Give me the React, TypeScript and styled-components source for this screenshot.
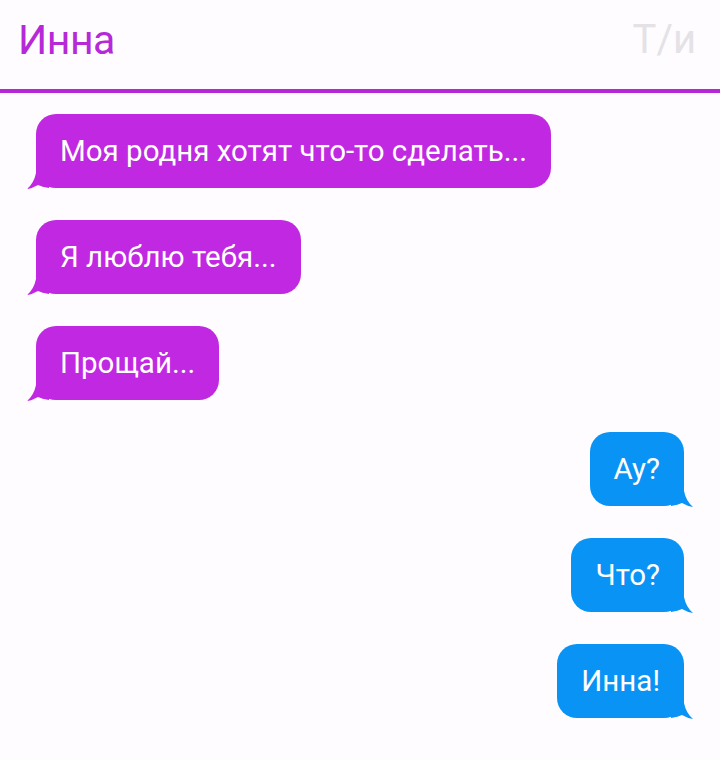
import React from "react";
import styled, { createGlobalStyle } from "styled-components";

const Global = createGlobalStyle`
  html, body { margin: 0; padding: 0; background: #fefcfe; }
  body { font-family: Roboto, "Noto Sans", sans-serif; }
`;

const Page = styled.div`
  width: 720px;
  height: 760px;
  background: #fefcfe;
  display: flex;
  flex-direction: column;
`;

const Header = styled.header`
  height: 93px;
  box-sizing: border-box;
  display: flex;
  align-items: center;
  justify-content: space-between;
  padding: 0 24px 10px 18px;
  border-bottom: 4px solid #b526d6;
`;

const Title = styled.h1`
  margin: 0;
  font-weight: 400;
  font-size: 41px;
  color: #b52ad6;
  letter-spacing: -0.5px;
`;

const Tag = styled.span`
  font-size: 40px;
  color: #e4e2e6;
  font-weight: 400;
`;

const List = styled.div`
  display: flex;
  flex-direction: column;
  gap: 32px;
  padding: 21px 36px 0 36px;
`;

const Row = styled.div<{ $mine?: boolean }>`
  display: flex;
  justify-content: ${(p) => (p.$mine ? "flex-end" : "flex-start")};
`;

const Bubble = styled.div<{ $mine?: boolean }>`
  position: relative;
  height: 74px;
  box-sizing: border-box;
  display: flex;
  align-items: center;
  padding: 0 24px 0 24px;
  border-radius: 20px;
  background: ${(p) => (p.$mine ? "#0994f5" : "#c128e1")};
  color: #ffffff;
  font-size: 29.5px;
  white-space: nowrap;
`;

const Tail = styled.svg<{ $mine?: boolean }>`
  position: absolute;
  bottom: -1px;
  width: 24px;
  height: 24px;
  ${(p) => (p.$mine ? "right: -9px; transform: scaleX(-1);" : "left: -9px;")}
`;

const msgs: { text: string; mine?: boolean }[] = [
  { text: "Моя родня хотят что-то сделать..." },
  { text: "Я люблю тебя..." },
  { text: "Прощай..." },
  { text: "Ау?", mine: true },
  { text: "Что?", mine: true },
  { text: "Инна!", mine: true },
];

export default function App() {
  return (
    <Page>
      <Global />
      <Header>
        <Title>Инна</Title>
        <Tag>Т/и</Tag>
      </Header>
      <List>
        {msgs.map((m, i) => (
          <Row key={i} $mine={m.mine}>
            <Bubble $mine={m.mine}>
              <Tail $mine={m.mine} viewBox="0 0 24 24">
                <path
                  d="M9 0 L22 0 L22 23 Q15 22 11 20 Q6 23 0 24 Q7 18 9 8 Z"
                  fill={m.mine ? "#0994f5" : "#c128e1"}
                />
              </Tail>
              {m.text}
            </Bubble>
          </Row>
        ))}
      </List>
    </Page>
  );
}
